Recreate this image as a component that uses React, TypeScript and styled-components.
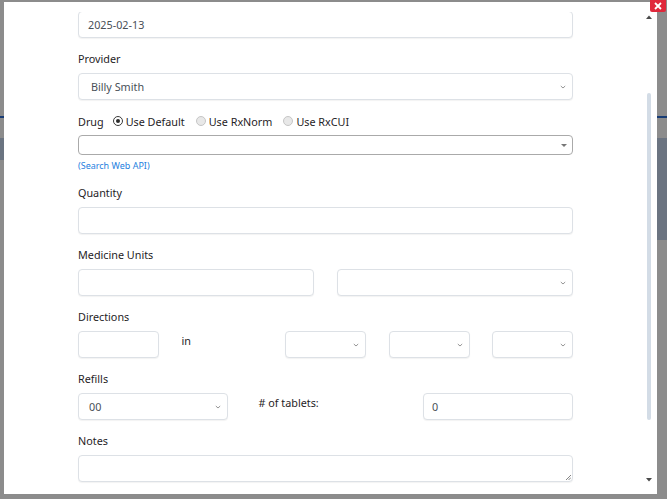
import React from 'react';
import styled, { createGlobalStyle } from 'styled-components';

const GlobalStyle = createGlobalStyle`
  html, body {
    margin: 0;
    padding: 0;
    height: 100%;
    overflow: hidden;
  }
  body {
    font-family: "Noto Sans", "Open Sans", sans-serif;
    background: #fff;
  }
`;

// page behind the modal, mostly hidden by the backdrop
const Page = styled.div`
  width: 667px;
  height: 499px;
  display: flex;
  flex-direction: column;
  background: #fff;
`;

const PageHeader = styled.div`
  height: 116px;
  border-bottom: 2px solid #2d6ed6;
`;

const PageToolbar = styled.div`
  height: 20px;
`;

const PageTableHead = styled.div`
  height: 22px;
  background: #c4d4ec;
`;

const PageRows = styled.div`
  flex: 1;
  display: flex;
  justify-content: flex-end;
`;

const PageSide = styled.div`
  width: 20px;
  height: 80px;
  background: #c4d4ec;
`;

const Backdrop = styled.div`
  position: fixed;
  inset: 0;
  background: rgba(0, 0, 0, 0.45);
  padding: 2px 10px 5px 4px;
  display: flex;
  align-items: flex-start;
`;

const Modal = styled.div`
  position: relative;
  width: 653px;
  height: 492px;
  background: #fff;
  display: flex;
`;

const CloseButton = styled.div`
  position: absolute;
  top: -5px;
  right: -9px;
  width: 16px;
  height: 15px;
  background: #e0283b;
  border-radius: 2px;
  display: flex;
  align-items: flex-end;
  justify-content: center;
  padding-bottom: 2px;
  box-sizing: border-box;
`;

const Body = styled.div`
  flex: 1;
  padding-top: 10px;
  display: flex;
  flex-direction: column;
`;

const Viewport = styled.div`
  flex: 1;
  overflow: hidden;
`;

const Form = styled.div`
  width: 495px;
  margin: -1px 0 0 74px;
  display: flex;
  flex-direction: column;
  color: #1f2326;
  font-size: 10.8px;
`;

const Group = styled.div`
  display: flex;
  flex-direction: column;
  margin-bottom: 13px;
`;

const Label = styled.div`
  height: 16px;
  line-height: 16px;
  margin-bottom: 6px;
`;

const Box = styled.div<{ $pad?: number; $color?: string }>`
  height: 27px;
  box-sizing: border-box;
  border: 1px solid #dde1e6;
  border-radius: 4px;
  box-shadow: 0 1px 1px rgba(0, 0, 0, 0.05);
  background: #fff;
  display: flex;
  align-items: center;
  justify-content: space-between;
  padding: 0 6px 0 ${(p) => p.$pad ?? 9}px;
  color: ${(p) => p.$color ?? '#495057'};
  font-size: 10.8px;
`;

const Notes = styled(Box)`
  align-items: flex-end;
  justify-content: flex-end;
  padding: 0 1px 1px 0;
`;

const DrugRow = styled.div`
  height: 16px;
  display: flex;
  align-items: center;
  margin-bottom: 6px;
`;

const DrugLabel = styled.span`
  margin-right: 9px;
`;

const RadioOption = styled.label`
  display: flex;
  align-items: center;
  gap: 3px;
  margin-right: 11px;
`;

const RadioDot = styled.span<{ $checked?: boolean }>`
  width: 10px;
  height: 10px;
  box-sizing: border-box;
  border-radius: 50%;
  border: 1px solid ${(p) => (p.$checked ? '#3a3a3a' : '#c6c6c6')};
  background: ${(p) => (p.$checked ? '#fff' : '#e8e8e8')};
  display: flex;
  align-items: center;
  justify-content: center;
  &::after {
    content: '';
    width: 4px;
    height: 4px;
    border-radius: 50%;
    background: ${(p) => (p.$checked ? '#2b2b2b' : 'transparent')};
  }
`;

const Select2Box = styled.div`
  height: 20px;
  box-sizing: border-box;
  border: 1px solid #aaa;
  border-radius: 4px;
  display: flex;
  align-items: center;
  justify-content: flex-end;
  padding-right: 5px;
`;

const ApiLink = styled.a`
  font-size: 9px;
  color: #1f7fe0;
  line-height: 12px;
  margin-top: 5px;
  text-decoration: none;
`;

const Cols = styled.div<{ $n: number }>`
  display: grid;
  grid-template-columns: repeat(${(p) => p.$n}, 1fr);
  column-gap: 22.5px;
`;

const InlineText = styled.div<{ $indent?: number }>`
  line-height: 16px;
  padding: 2px 0 0 ${(p) => p.$indent ?? 0}px;
`;

const ScrollTrack = styled.div`
  width: 12px;
  margin-right: 2px;
  display: flex;
  flex-direction: column;
  align-items: center;
  padding: 10px 0 9px;
  box-sizing: border-box;
`;

const ScrollArrow = styled.div`
  height: 10px;
  display: flex;
  align-items: center;
  justify-content: center;
`;

const ScrollThumb = styled.div`
  width: 4px;
  height: 327px;
  margin-top: 71px;
  border-radius: 2px;
  background: #d3dce6;
`;

const Spacer = styled.div`
  flex: 1;
`;

const Chevron = () => (
  <svg width="6" height="4" viewBox="0 0 6 4">
    <polyline points="0.8,1 3,3 5.2,1" fill="none" stroke="#7a7a7a" strokeWidth="0.8" />
  </svg>
);

const Caret = () => (
  <svg width="6" height="3" viewBox="0 0 6 3">
    <polygon points="0,0 6,0 3,3" fill="#777" />
  </svg>
);

const ScrollCaret = ({ up }: { up?: boolean }) => (
  <svg width="6" height="4" viewBox="0 0 6 4">
    <polygon points={up ? '0,4 6,4 3,0.5' : '0,0 6,0 3,3.5'} fill="#4a4a4a" />
  </svg>
);

const Grip = () => (
  <svg width="6" height="6" viewBox="0 0 6 6">
    <line x1="1" y1="6" x2="6" y2="1" stroke="#666" strokeWidth="0.8" />
    <line x1="3.5" y1="6" x2="6" y2="3.5" stroke="#666" strokeWidth="0.8" />
  </svg>
);

const Select = ({ value, pad }: { value?: string; pad?: number }) => (
  <Box $pad={pad ?? 11} $color="#495057">
    <span>{value}</span>
    <Chevron />
  </Box>
);

const Radio = ({ label, checked }: { label: string; checked?: boolean }) => (
  <RadioOption>
    <RadioDot $checked={checked} />
    {label}
  </RadioOption>
);

export default function App() {
  return (
    <>
      <GlobalStyle />
      <Page>
        <PageHeader />
        <PageToolbar />
        <PageTableHead />
        <PageRows>
          <PageSide />
        </PageRows>
      </Page>
      <Backdrop>
        <Modal>
          <CloseButton>
            <svg width="8" height="8" viewBox="0 0 8 8">
              <path d="M1 1L7 7M7 1L1 7" stroke="#fff" strokeWidth="1.8" />
            </svg>
          </CloseButton>
          <Body>
            <Viewport>
              <Form>
                <Group>
                  <Box>2025-02-13</Box>
                </Group>

                <Group>
                  <Label>Provider</Label>
                  <Select value="Billy Smith" pad={12} />
                </Group>

                <Group>
                  <DrugRow>
                    <DrugLabel>Drug</DrugLabel>
                    <Radio label="Use Default" checked />
                    <Radio label="Use RxNorm" />
                    <Radio label="Use RxCUI" />
                  </DrugRow>
                  <Select2Box>
                    <Caret />
                  </Select2Box>
                  <ApiLink>(Search Web API)</ApiLink>
                </Group>

                <Group>
                  <Label>Quantity</Label>
                  <Box />
                </Group>

                <Group>
                  <Label>Medicine Units</Label>
                  <Cols $n={2}>
                    <Box />
                    <Select />
                  </Cols>
                </Group>

                <Group>
                  <Label>Directions</Label>
                  <Cols $n={5}>
                    <Box />
                    <InlineText>in</InlineText>
                    <Select />
                    <Select />
                    <Select />
                  </Cols>
                </Group>

                <Group>
                  <Label>Refills</Label>
                  <Cols $n={3}>
                    <Select value="00" pad={10} />
                    <InlineText $indent={8}># of tablets:</InlineText>
                    <Box $pad={8}>0</Box>
                  </Cols>
                </Group>

                <Group>
                  <Label>Notes</Label>
                  <Notes>
                    <Grip />
                  </Notes>
                </Group>
              </Form>
            </Viewport>
          </Body>
          <ScrollTrack>
            <ScrollArrow>
              <ScrollCaret up />
            </ScrollArrow>
            <ScrollThumb />
            <Spacer />
            <ScrollArrow>
              <ScrollCaret />
            </ScrollArrow>
          </ScrollTrack>
        </Modal>
      </Backdrop>
    </>
  );
}
